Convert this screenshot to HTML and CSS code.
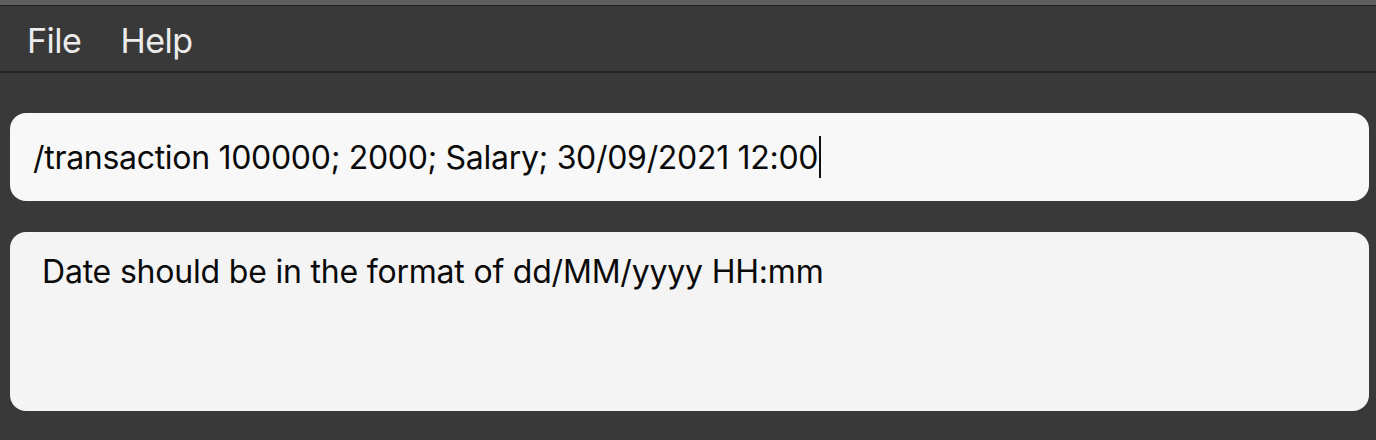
FILE: index.html
```html
<!DOCTYPE html>
<html>
<head>
<meta charset="utf-8">
<link rel="stylesheet" href="styles.css">
</head>
<body>
<div class="topstrip"></div>
<nav class="menubar">
  <span class="menu-item">File</span>
  <span class="menu-item">Help</span>
</nav>
<main class="content">
  <div class="command-box">
    <span class="command-text">/transaction 100000; 2000; Salary; 30/09/2021 12:00</span><span class="caret"></span>
  </div>
  <div class="result-box">
    <span class="result-text">Date should be in the format of dd/MM/yyyy HH:mm</span>
  </div>
</main>
</body>
</html>
```

FILE: styles.css
```css
* { box-sizing: border-box; }
html, body {
  margin: 0;
  padding: 0;
  background: #393939;
  font-family: "Inter", "Noto Sans", sans-serif;
  width: 1376px;
  height: 440px;
  overflow: hidden;
}
.topstrip {
  height: 6px;
  background: #5e5e5e;
  border-bottom: 1px solid #1c1c1c;
}
.menubar {
  height: 67px;
  display: flex;
  align-items: center;
  padding-left: 27px;
  padding-top: 3px;
  gap: 39px;
  background: #393939;
  border-bottom: 2px solid #232323;
}
.menu-item {
  color: #ececec;
  font-size: 34px;
  letter-spacing: -0.5px;
}
.content {
  padding: 40px 7px 0 10px;
  display: flex;
  flex-direction: column;
  gap: 31px;
}
.command-box {
  height: 88px;
  background: #f8f8f8;
  border-radius: 16px;
  display: flex;
  align-items: center;
  padding-left: 23px;
}
.command-text {
  font-size: 32px;
  color: #0a0a0a;
  letter-spacing: -0.3px;
}
.caret {
  width: 2px;
  height: 42px;
  background: #111;
  margin-left: 1px;
}
.result-box {
  height: 179px;
  background: #f4f4f4;
  border-radius: 16px;
  padding: 20px 0 0 32px;
}
.result-text {
  font-size: 32px;
  color: #0a0a0a;
  letter-spacing: -0.2px;
}
```
